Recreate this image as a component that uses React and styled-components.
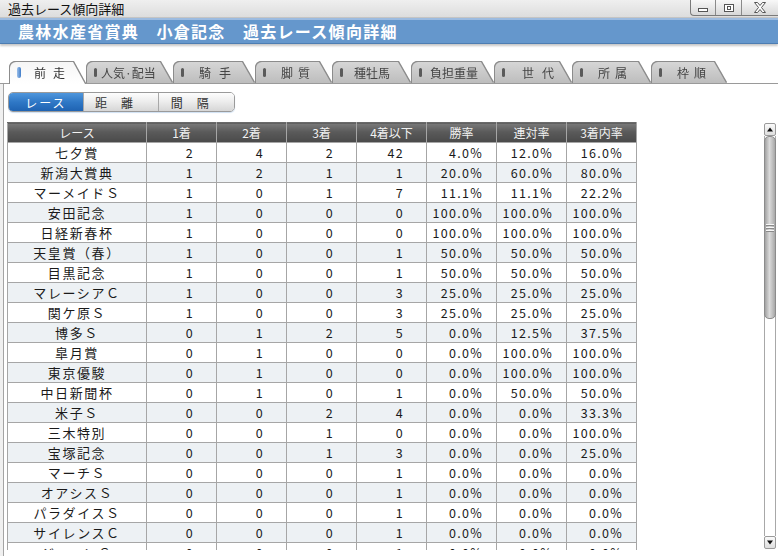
import React from 'react';
import styled, { createGlobalStyle } from 'styled-components';

const GlobalStyle = createGlobalStyle`
  html, body { margin: 0; padding: 0; background: #fff; overflow: hidden; }
  body { font-family: "Noto Sans CJK JP", "Noto Sans", sans-serif; }
`;

const Window = styled.div`
  width: 778px;
  height: 556px;
  display: flex;
  flex-direction: column;
  overflow: hidden;
  background: #fff;
`;

const TitleBar = styled.div`
  height: 18px;
  flex: none;
  display: flex;
  justify-content: space-between;
  align-items: flex-start;
  box-sizing: border-box;
  background: linear-gradient(#efefef, #dddddd);
  border-bottom: 1px solid #c4c4c4;
`;

const TitleText = styled.div`
  font-size: 13px;
  line-height: 17px;
  padding-left: 8px;
  color: #111;
`;

const WinButtons = styled.div`
  display: flex;
  height: 15px;
  border-left: 1px solid #7a7a7a;
  border-bottom: 1px solid #7a7a7a;
  border-bottom-left-radius: 4px;
  background: linear-gradient(#f8f8f8, #d8d8d8);
  overflow: hidden;
`;

const WinButton = styled.div`
  width: ${p => p.$w}px;
  display: flex;
  align-items: center;
  justify-content: center;
  border-left: 1px solid #8a8a8a;
  &:first-child { border-left: none; }
`;

const Banner = styled.div`
  height: 26px;
  flex: none;
  box-sizing: border-box;
  background: #6597cc;
  border-top: 2px solid #9cbbe0;
  border-bottom: 1px solid #4d7db2;
  box-shadow: 0 2px 2px rgba(0, 0, 0, 0.22);
  color: #fff;
  font-size: 16px;
  font-weight: bold;
  letter-spacing: 1.3px;
  line-height: 22px;
  padding-left: 18px;
`;

const TabStrip = styled.div`
  flex: none;
  height: 40px;
  box-sizing: border-box;
  display: flex;
  align-items: flex-end;
  padding: 0 0 0 10px;
  border-bottom: 1px solid #9a9a9a;
`;

const Tab = styled.div`
  flex: none;
  width: ${p => p.$w}px;
  height: ${p => (p.$active ? 22 : 21)}px;
  margin-bottom: ${p => (p.$active ? -1 : 0)}px;
  position: relative;
  z-index: ${p => (p.$active ? 2 : 1)};
  filter: drop-shadow(1px 0 0 #8c8c8c) drop-shadow(-1px 0 0 #8c8c8c) drop-shadow(0 -1px 0 #8c8c8c);
`;

const TabFace = styled.div`
  height: 100%;
  box-sizing: border-box;
  display: flex;
  align-items: center;
  padding: 0 0 ${p => (p.$active ? 1 : 0)}px 7px;
  border-top-left-radius: 6px;
  clip-path: polygon(0 0, calc(100% - 14px) 0, calc(100% - 2px) 100%, 0 100%);
  background: ${p => (p.$active ? 'linear-gradient(#f6f6f6, #ffffff)' : 'linear-gradient(#d6d6d6, #bdbdbd)')};
  color: ${p => (p.$active ? '#333' : '#444')};
  font-size: 12px;
`;

const TabMark = styled.span`
  width: ${p => (p.$active ? 4 : 3)}px;
  height: ${p => (p.$active ? 11 : 9)}px;
  border-radius: 2px;
  background: ${p => (p.$active ? 'linear-gradient(90deg, #9cc0ea, #3f7cc8)' : '#5a5a5a')};
  margin-right: ${p => p.$gap}px;
  flex: none;
`;

const TabLabel = styled.span`
  letter-spacing: ${p => p.$spread}px;
  white-space: nowrap;
`;

const PanelOuter = styled.div`
  flex: 1;
  display: flex;
  padding-left: 3px;
  background: linear-gradient(90deg, #f0f0f0, #d8d8d8);
`;

const Panel = styled.div`
  flex: 1;
  background: #fff;
  border-left: 1px solid #a4a4a4;
  padding: 8px 0 0 4px;
  display: flex;
  flex-direction: column;
`;

const Segmented = styled.div`
  display: flex;
  width: 227px;
  height: 20px;
  box-sizing: border-box;
  border: 1px solid #9a9a9a;
  border-radius: 5px;
  overflow: hidden;
  box-shadow: 0 1px 1px #cfe0f3;
`;

const SegButton = styled.div`
  width: ${p => p.$w}px;
  display: flex;
  align-items: center;
  justify-content: center;
  font-size: 12px;
  letter-spacing: ${p => p.$spread}px;
  color: ${p => (p.$active ? '#fff' : '#333')};
  background: ${p => (p.$active
    ? 'linear-gradient(#4f96dc, #2f78c6 50%, #1f63b2)'
    : 'linear-gradient(#fdfdfd, #ececec 50%, #d6d6d6)')};
  border-left: 1px solid ${p => (p.$active ? '#2a5f9c' : '#a8a8a8')};
  &:first-child { border-left: none; }
`;

const ScrollArea = styled.div`
  display: flex;
  height: 428px;
  margin-top: 10px;
`;

const Viewport = styled.div`
  flex: 1;
  overflow: hidden;
  margin-left: -1px;
`;

const Table = styled.table`
  width: 629px;
  table-layout: fixed;
  border-collapse: collapse;
`;

const HeadCell = styled.th`
  height: 19px;
  padding: 0;
  font-size: 12px;
  font-weight: normal;
  color: #f2f2f2;
  background: linear-gradient(#7a7a7a, #5a5a5a 45%, #4a4a4a);
  border: 1px solid #a6a6a6;
  border-top-color: #6a6a6a;
  white-space: nowrap;
`;

const Row = styled.tr`
  background: ${p => (p.$alt ? '#edf1f4' : '#fff')};
`;

const NameCell = styled.td`
  height: 19px;
  padding: 0;
  border: 1px solid #a6a6a6;
  text-align: center;
  font-size: 13px;
  letter-spacing: 1.6px;
  color: #1a1a1a;
  white-space: nowrap;
`;

const NumCell = styled.td`
  height: 19px;
  padding: 0 ${p => (p.$pct ? 13 : 22)}px 0 0;
  border: 1px solid #a6a6a6;
  text-align: right;
  font-size: 12.5px;
  font-variant-numeric: tabular-nums;
  letter-spacing: 1.3px;
  color: #1a1a1a;
`;

const ScrollBar = styled.div`
  width: 12px;
  margin: 1px 2px 0 0;
  display: flex;
  flex-direction: column;
  height: 426px;
`;

const ArrowButton = styled.div`
  height: 11px;
  flex: none;
  border: 1px solid #9a9a9a;
  border-radius: 2px;
  background: linear-gradient(#fafafa, #dedede);
  display: flex;
  align-items: center;
  justify-content: center;
`;

const Track = styled.div`
  flex: 1;
  display: flex;
  flex-direction: column;
  border-left: 1px solid #a8a8a8;
  border-right: 1px solid #a8a8a8;
`;

const Thumb = styled.div`
  height: 183px;
  flex: none;
  box-sizing: border-box;
  border: 1px solid #8c8c8c;
  border-radius: 5px;
  margin: 0 -1px;
  background: linear-gradient(90deg, #a2a2a2, #dadada 45%, #c4c4c4 70%, #a8a8a8);
  display: flex;
  flex-direction: column;
  align-items: center;
  justify-content: center;
  gap: 2px;
`;

const Grip = styled.span`
  width: 8px;
  height: 1px;
  background: #f6f6f6;
  box-shadow: 0 1px 0 #8a8a8a;
`;

const tabs = [
  { label: '前走', w: 77, spread: 7, gap: 13, active: true },
  { label: '人気·配当', w: 87, spread: 0, gap: 4 },
  { label: '騎手', w: 82, spread: 8, gap: 15 },
  { label: '脚質', w: 77, spread: 5, gap: 15 },
  { label: '種牡馬', w: 79, spread: 0, gap: 11 },
  { label: '負担重量', w: 83, spread: 0, gap: 8 },
  { label: '世代', w: 78, spread: 8, gap: 17 },
  { label: '所属', w: 79, spread: 5, gap: 15 },
  { label: '枠順', w: 76, spread: 5, gap: 15 },
];

const heads = ['レース', '1着', '2着', '3着', '4着以下', '勝率', '連対率', '3着内率'];
const widths = [139, 70, 70, 70, 70, 70, 70, 70];

const races = [
  ['七夕賞', 2, 4, 2, 42, '4.0%', '12.0%', '16.0%'],
  ['新潟大賞典', 1, 2, 1, 1, '20.0%', '60.0%', '80.0%'],
  ['マーメイドＳ', 1, 0, 1, 7, '11.1%', '11.1%', '22.2%'],
  ['安田記念', 1, 0, 0, 0, '100.0%', '100.0%', '100.0%'],
  ['日経新春杯', 1, 0, 0, 0, '100.0%', '100.0%', '100.0%'],
  ['天皇賞（春）', 1, 0, 0, 1, '50.0%', '50.0%', '50.0%'],
  ['目黒記念', 1, 0, 0, 1, '50.0%', '50.0%', '50.0%'],
  ['マレーシアＣ', 1, 0, 0, 3, '25.0%', '25.0%', '25.0%'],
  ['関ケ原Ｓ', 1, 0, 0, 3, '25.0%', '25.0%', '25.0%'],
  ['博多Ｓ', 0, 1, 2, 5, '0.0%', '12.5%', '37.5%'],
  ['皐月賞', 0, 1, 0, 0, '0.0%', '100.0%', '100.0%'],
  ['東京優駿', 0, 1, 0, 0, '0.0%', '100.0%', '100.0%'],
  ['中日新聞杯', 0, 1, 0, 1, '0.0%', '50.0%', '50.0%'],
  ['米子Ｓ', 0, 0, 2, 4, '0.0%', '0.0%', '33.3%'],
  ['三木特別', 0, 0, 1, 0, '0.0%', '0.0%', '100.0%'],
  ['宝塚記念', 0, 0, 1, 3, '0.0%', '0.0%', '25.0%'],
  ['マーチＳ', 0, 0, 0, 1, '0.0%', '0.0%', '0.0%'],
  ['オアシスＳ', 0, 0, 0, 1, '0.0%', '0.0%', '0.0%'],
  ['パラダイスＳ', 0, 0, 0, 1, '0.0%', '0.0%', '0.0%'],
  ['サイレンスＣ', 0, 0, 0, 1, '0.0%', '0.0%', '0.0%'],
  ['ジューンＳ', 0, 0, 0, 1, '0.0%', '0.0%', '0.0%'],
];

const MinIcon = () => (
  <svg width="12" height="10" viewBox="0 0 12 10">
    <rect x="1.5" y="5.5" width="9" height="3" fill="#fff" stroke="#555" />
  </svg>
);

const MaxIcon = () => (
  <svg width="12" height="10" viewBox="0 0 12 10">
    <rect x="1.5" y="1.5" width="9" height="7" fill="#fff" stroke="#555" />
    <rect x="4.5" y="3.5" width="3" height="3" fill="none" stroke="#555" />
  </svg>
);

const CloseIcon = () => (
  <svg width="14" height="11" viewBox="0 0 14 11">
    <path d="M1.5 0.5h3l2.5 3 2.5-3h3l-4 5 4 5h-3l-2.5-3-2.5 3h-3l4-5z" fill="#fff" stroke="#555" />
  </svg>
);

const Arrow = ({ up }) => (
  <svg width="6" height="5" viewBox="0 0 6 5">
    <path d={up ? 'M0 4.5L3 0.5 6 4.5z' : 'M0 0.5L3 4.5 6 0.5z'} fill="#111" />
  </svg>
);

export default function App() {
  return (
    <Window>
      <GlobalStyle />
      <TitleBar>
        <TitleText>過去レース傾向詳細</TitleText>
        <WinButtons>
          <WinButton $w={24}><MinIcon /></WinButton>
          <WinButton $w={25}><MaxIcon /></WinButton>
          <WinButton $w={36}><CloseIcon /></WinButton>
        </WinButtons>
      </TitleBar>
      <Banner>農林水産省賞典　小倉記念　過去レース傾向詳細</Banner>
      <TabStrip>
        {tabs.map(t => (
          <Tab key={t.label} $w={t.w} $active={t.active}>
            <TabFace $active={t.active}>
              <TabMark $active={t.active} $gap={t.gap} />
              <TabLabel $spread={t.spread}>{t.label}</TabLabel>
            </TabFace>
          </Tab>
        ))}
      </TabStrip>
      <PanelOuter>
        <Panel>
          <Segmented>
            <SegButton $w={75} $active $spread={2}>レース</SegButton>
            <SegButton $w={76} $spread={14}>距離</SegButton>
            <SegButton $w={76} $spread={14}>間隔</SegButton>
          </Segmented>
          <ScrollArea>
            <Viewport>
              <Table>
                <colgroup>
                  {widths.map((w, i) => <col key={i} style={{ width: w }} />)}
                </colgroup>
                <thead>
                  <tr>
                    {heads.map(h => <HeadCell key={h}>{h}</HeadCell>)}
                  </tr>
                </thead>
                <tbody>
                  {races.map((r, i) => (
                    <Row key={r[0]} $alt={i % 2 === 1}>
                      <NameCell>{r[0]}</NameCell>
                      {r.slice(1).map((v, j) => (
                        <NumCell key={j} $pct={j >= 4}>{v}</NumCell>
                      ))}
                    </Row>
                  ))}
                </tbody>
              </Table>
            </Viewport>
            <ScrollBar>
              <ArrowButton><Arrow up /></ArrowButton>
              <Track>
                <Thumb>
                  <Grip />
                  <Grip />
                  <Grip />
                </Thumb>
              </Track>
              <ArrowButton><Arrow /></ArrowButton>
            </ScrollBar>
          </ScrollArea>
        </Panel>
      </PanelOuter>
    </Window>
  );
}
